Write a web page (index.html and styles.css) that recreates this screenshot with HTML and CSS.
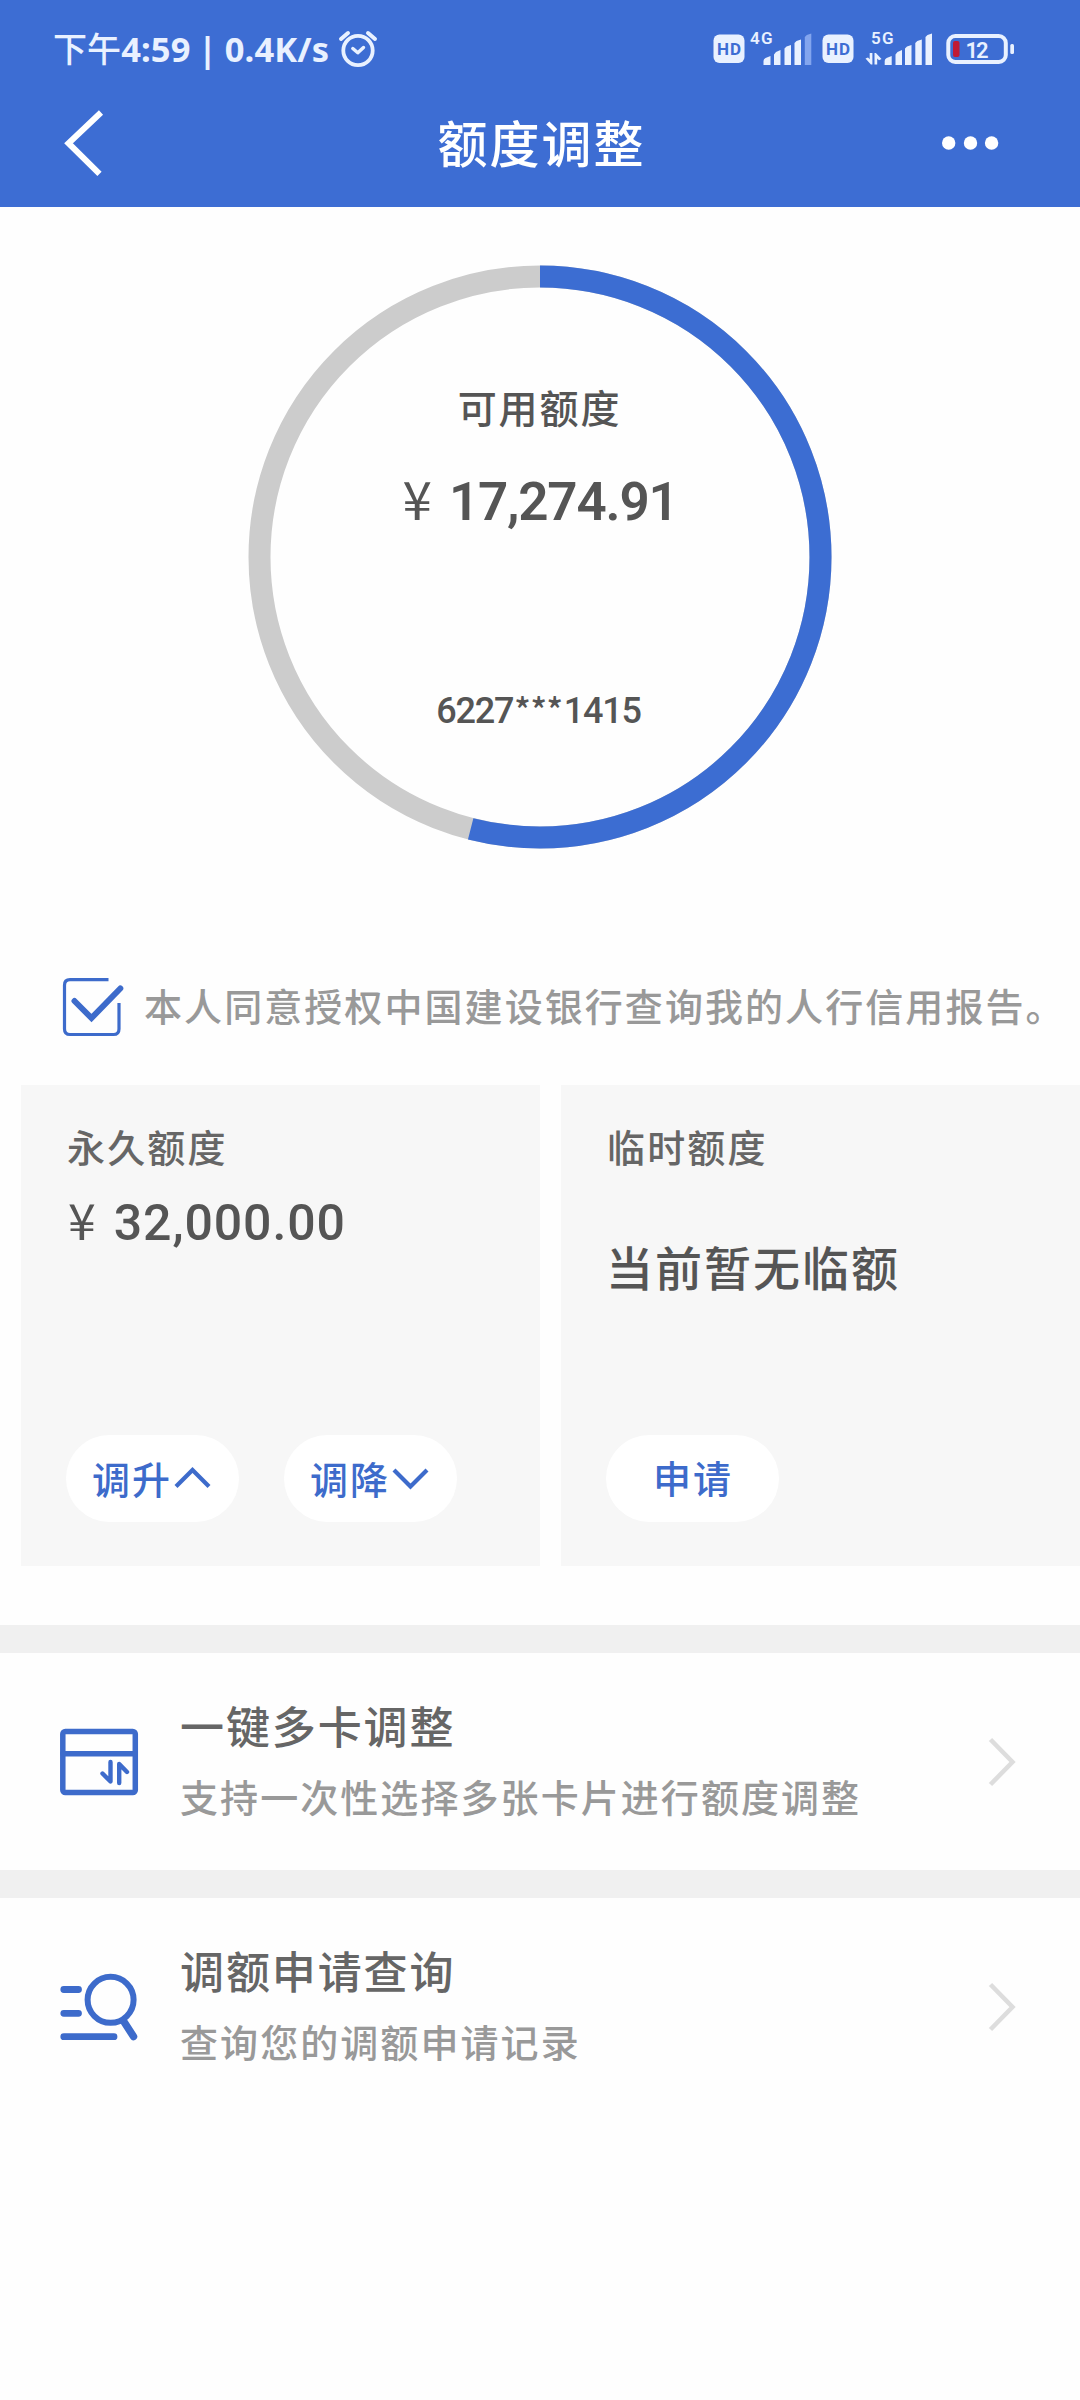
FILE: index.html
```html
<!DOCTYPE html>
<html lang="zh-CN">
<head>
<meta charset="utf-8">
<title>额度调整</title>
<link rel="stylesheet" href="styles.css">
</head>
<body>
<header class="header">
  <div class="status">
    <span class="status-text"><span class="status-cjk">下午</span>4:59 | 0.4K/s</span>
    <svg class="alarm" width="40" height="38" viewBox="0 0 40 38" fill="none" stroke="#e9f1ff" stroke-linecap="round" stroke-linejoin="round">
      <circle cx="20" cy="20.5" r="14.7" stroke-width="3.8"/>
      <path d="M3 9 10 3M30 3 37 9" stroke-width="4"/>
      <path d="M14.8 18.5 19.8 22.8 25.5 17.5" stroke-width="3.4"/>
    </svg>
    <svg class="signals" width="304" height="58" viewBox="712 20 304 58" fill="#e9f1ff">
      <rect x="713.5" y="34.5" width="31" height="28.5" rx="6"/>
      <text class="hd" x="717" y="54.5" textLength="24">HD</text>
      <text class="net" x="750" y="44.3" textLength="22.5">4G</text>
      <path d="M763.5 65v-4q0-2 2-3l5-2v9zM774 65V54.500l2-2.500 4.500-2V65zM784.500 65V48.500l2-2 4.500-1.500V65zM794.500 65V43l2-2 4.500-1.500V65z"/>
      <path d="M804.800 65V37l2-2 4.500-1.500V65z" fill="#83a5ee"/>
      <rect x="822.5" y="34.500" width="31" height="28.500" rx="6"/>
      <text class="hd" x="826" y="54.500" textLength="24">HD</text>
      <text class="net" x="871" y="44.300" textLength="22.500">5G</text>
      <path d="M865.500 58.500l2.500-1 1.700 1.700V53h2.700v11.500h-1.500zM874.500 64.500V53h1.400l5.600 6-2.500 1.200-1.800-1.800v6.100z"/>
      <path d="M884.700 65v-4q0-2 2-3l5-2v9zM895.500 65V54.500l2-2.500 4.500-2V65zM905 65V48.500l2-2 4.500-1.500V65zM915.300 65V43l2-2 4.500-1.500V65zM925.500 65V37l2-2 4.500-1.500V65z"/>
      <rect x="948.300" y="36" width="57.500" height="26" rx="7" fill="none" stroke="#e9f1ff" stroke-width="4"/>
      <rect x="1010.300" y="44" width="3.700" height="10" rx="1.500"/>
      <rect x="953" y="41" width="6.500" height="16" rx="2" fill="#c01a35"/>
      <text class="level" x="965.500" y="57.800" textLength="23">12</text>
    </svg>
  </div>
  <nav class="navbar">
    <svg class="back" width="42" height="70" viewBox="63 108 42 70" fill="none" stroke="#fff" stroke-width="6"><path d="M101 112.500 68.500 143.200 99.500 173.800"/></svg>
    <h1 class="title">额度调整</h1>
    <svg class="more" width="60" height="20" viewBox="940 133 60 20" fill="#fff"><circle cx="948.700" cy="143" r="6.700"/><circle cx="970.500" cy="143" r="6.700"/><circle cx="991.600" cy="143" r="6.700"/></svg>
  </nav>
</header>

<main>
  <section class="gauge">
    <svg class="ring" width="584" height="584" viewBox="-292 -292 584 584" fill="none" stroke-width="22">
      <circle r="280.500" stroke="#ccc"/>
      <circle r="280.500" stroke="#3c6dd2" pathLength="10000" stroke-dasharray="5398 4602" transform="rotate(-90)"/>
    </svg>
    <div class="gauge-body">
      <div class="gauge-label">可用额度</div>
      <div class="gauge-amount"><span class="yen">¥</span><span class="num">17,274.91</span></div>
      <div class="gauge-card">6227<span class="mask">***</span>1415</div>
    </div>
  </section>

  <label class="consent">
    <svg width="64" height="62" viewBox="61 976 64 62" fill="none" stroke="#3d6bcb">
      <path d="M108.500 979.700H70q-5.500 0-5.500 5.500V1029q0 5.500 5.500 5.500h43.500q5.500 0 5.500-5.500v-26" stroke-width="3.200"/>
      <path d="M74.500 1001 91.500 1018 120.300 988.500" stroke-width="6" stroke-linecap="round"/>
    </svg>
    <span class="consent-text">本人同意授权中国建设银行查询我的人行信用报告。</span>
  </label>

  <section class="cards">
    <article class="card">
      <h2 class="card-title">永久额度</h2>
      <div class="card-amount"><span class="yen">¥</span><span class="num">32,000.00</span></div>
      <div class="actions">
        <button class="pill">调升<svg width="40" height="24" viewBox="0 0 40 24"><path d="M4 20.500 20.500 4 37 20.500"/></svg></button>
        <button class="pill">调降<svg width="40" height="24" viewBox="0 0 40 24"><path d="M4 4 20.500 20.500 37 4"/></svg></button>
      </div>
    </article>
    <article class="card">
      <h2 class="card-title">临时额度</h2>
      <div class="card-note">当前暂无临额</div>
      <div class="actions">
        <button class="pill apply">申请</button>
      </div>
    </article>
  </section>

  <section class="list">
    <a class="row">
      <svg width="80" height="70" viewBox="59 1727 80 70" fill="none" stroke="#3d6bcb" stroke-width="5.500" stroke-linecap="round" stroke-linejoin="round">
        <rect x="62.800" y="1731.500" width="72.500" height="61" rx="2.500"/>
        <path d="M63 1753.700H135"/>
        <path d="M102.500 1773.500 110.500 1781.500V1762M119.200 1783V1764L127 1772" stroke-width="4.400"/>
      </svg>
      <div class="row-text"><h3>一键多卡调整</h3><p>支持一次性选择多张卡片进行额度调整</p></div>
      <svg class="go" width="28" height="50" viewBox="0 0 28 50"><path d="M2.500 2.500 24.500 25 2.500 47.500"/></svg>
    </a>
    <a class="row">
      <svg width="80" height="70" viewBox="59 1972 80 70" fill="none" stroke="#3d6bcb" stroke-width="6.800" stroke-linecap="round">
        <circle cx="110.600" cy="1999.800" r="23" stroke-width="6"/>
        <path d="M63.800 1989.500H78.500M63.800 2013.300H78.500M63.800 2036.700H114"/>
        <path d="M123.500 2021 133.500 2036.500" stroke-width="7.500"/>
      </svg>
      <div class="row-text"><h3>调额申请查询</h3><p>查询您的调额申请记录</p></div>
      <svg class="go" width="28" height="50" viewBox="0 0 28 50"><path d="M2.500 2.500 24.500 25 2.500 47.500"/></svg>
    </a>
  </section>
</main>
</body>
</html>
```
FILE: styles.css
```css
* { box-sizing: border-box; }
body, h1, h2, h3, p { margin: 0; font-weight: 500; }
body {
  width: 1080px;
  height: 2400px;
  overflow: hidden;
  background: #fefefe;
  color: #555;
  font-family: "Noto Sans CJK SC", sans-serif;
}
svg { display: block; flex: none; }

.header { height: 207px; background: #3d6dd3; color: #fff; }
.status { display: flex; height: 98px; padding: 0 64px 0 53px; align-items: center; color: #e9f1ff; }
.status-text { width: 285px; padding-bottom: 1px; white-space: nowrap; font: 700 34.500px/40px "Noto Sans", sans-serif; letter-spacing: 0.100px; word-spacing: -1.500px; }
.status-cjk { font-size: 34px; font-family: "Noto Sans CJK SC", sans-serif; font-weight: 500; }
.signals { margin-left: auto; }
.hd { font: 700 17px Roboto, sans-serif; fill: #3d6dd3; }
.net { font: 600 17px Roboto, sans-serif; }
.level { font: 600 22px Roboto, sans-serif; }
.navbar { display: flex; height: 90px; padding: 0 80px 0 63px; align-items: center; justify-content: space-between; }
.title { padding: 0 0 4px 38px; font-size: 50px; line-height: 60px; letter-spacing: 2px; }

.gauge { display: grid; justify-content: center; padding-top: 58px; }
.ring, .gauge-body { grid-area: 1 / 1; }
.gauge-body { display: flex; flex-direction: column; align-items: center; padding-top: 116px; }
.gauge-label { padding-right: 1px; font-size: 39px; line-height: 50px; letter-spacing: 1.900px; }
.gauge-amount { display: flex; margin-top: 36px; font-size: 53px; line-height: 60px; align-items: baseline; }
.gauge-amount .num { font-weight: 600; letter-spacing: -1.200px; }
.yen { font-family: "Noto Sans CJK SC", sans-serif; font-weight: 400; margin-right: 17px; }
.num { font-family: Roboto, sans-serif; font-weight: 500; }
.gauge-card { margin-top: 154px; padding-right: 3px; font: 500 36px/50px Roboto, sans-serif; letter-spacing: -1.200px; }
.mask { margin: 0 1px; font-family: "Noto Sans CJK SC", sans-serif; font-size: 34px; line-height: 1; letter-spacing: -0.300px; }

.consent { display: flex; align-items: center; margin-top: 127px; padding-left: 61px; height: 62px; gap: 19px; }
.consent-text { padding-bottom: 4px; font-size: 38px; line-height: 50px; letter-spacing: 2.070px; white-space: nowrap; color: #999; }

.cards { display: grid; grid-template-columns: 519px 519px; gap: 21px; margin-top: 47px; padding-left: 21px; height: 481px; }
.card { display: flex; flex-direction: column; padding: 36px 45px 44px; background: #f7f7f7; }
.card-title { padding-left: 1px; color: #666; font-size: 38px; line-height: 50px; letter-spacing: 2.150px; }
.card-amount { display: flex; align-items: baseline; margin-top: 19px; padding-left: 2px; font-size: 50px; line-height: 56px; }
.card-amount .num { letter-spacing: 0.900px; }
.card-amount .yen { margin-right: 18px; }
.card-note { margin-top: 65px; font-size: 47px; line-height: 60px; letter-spacing: 2px; }
.actions { display: flex; gap: 45px; margin-top: auto; }
.pill {
  display: flex; align-items: center; justify-content: center;
  width: 173px; height: 87px; padding: 0 1px 2px 0; border: 0; border-radius: 44px;
  background: #fff; color: #3d6bcb;
  font: 500 38px/50px "Noto Sans CJK SC", sans-serif; letter-spacing: 2px;
}
.pill.apply { padding: 0 0 3px 1px; }
.pill path { fill: none; stroke: #3d6bcb; stroke-width: 4.200; }

.list { margin-top: 59px; }
.row { display: flex; height: 245px; padding: 28px 64px 0 59px; border-top: 28px solid #f0f0f0; }
.row > svg { margin-top: 46px; }
.row-text { padding: 21px 0 0 41px; }
.row-text h3 { font-size: 44px; line-height: 60px; letter-spacing: 1.900px; color: #666; margin-top: -7px; }
.row-text p { font-size: 38px; line-height: 50px; letter-spacing: 2.070px; color: #999; margin-top: 16px; }
.row > .go { margin: 56px 0 0 auto; fill: none; stroke: #ddd; stroke-width: 4.500; }
```
